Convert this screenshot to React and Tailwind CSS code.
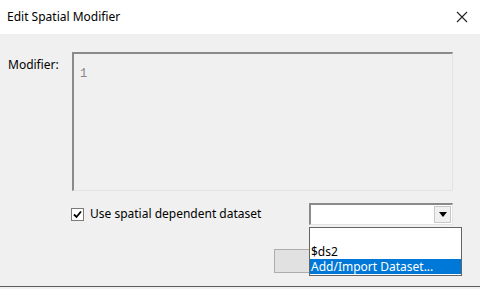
import React from "react";

export default function App() {
  const font = { fontFamily: '"Noto Sans", "Open Sans", sans-serif' };
  return (
    <div className="w-[480px] h-[289px] bg-[#f0f0f0] flex flex-col overflow-hidden text-black" style={font}>
      <div className="h-[34px] bg-white flex items-center justify-between pl-[7px] pr-[12px] shrink-0">
        <span className="text-[12px] leading-none">Edit Spatial Modifier</span>
        <svg width="12" height="12" viewBox="0 0 12 12" className="mt-[-1px]">
          <path d="M1 1 L11 11 M11 1 L1 11" stroke="#222" strokeWidth="1.1" fill="none" />
        </svg>
      </div>
      <div className="relative flex-1 flex flex-col">
        <div className="flex pt-[18px]">
          <span className="w-[72px] pl-[8px] pt-[6px] text-[12px] leading-[14px]">Modifier:</span>
          <div className="w-[381px] h-[139px] border-t-2 border-l-2 border-t-[#8a8a8a] border-l-[#8a8a8a] border-r border-b border-r-[#e3e3e3] border-b-[#e3e3e3] bg-[#f0f0f0] px-[6px] pt-[5px]">
            <span className="text-[12px] leading-none text-[#858585]" style={{ fontFamily: '"Liberation Mono", monospace' }}>1</span>
          </div>
        </div>
        <div className="flex items-center mt-[12px] h-[22px]">
          <div className="ml-[71px] w-[13px] h-[13px] border border-[#7a7a7a] bg-white flex items-center justify-center">
            <svg width="9" height="9" viewBox="0 0 9 9">
              <path d="M1 4.5 L3.5 7 L8 1.5" stroke="#000" strokeWidth="1.8" fill="none" />
            </svg>
          </div>
          <span className="ml-[6px] text-[12px] leading-none">Use spatial dependent dataset</span>
          <div className="ml-auto mr-[27px] w-[144px] h-[22px] bg-white border-t-2 border-l-2 border-t-[#8a8a8a] border-l-[#8a8a8a] border-r border-b border-r-[#e3e3e3] border-b-[#e3e3e3] flex justify-end p-[1px]">
            <div className="w-[17px] h-full bg-[#f0f0f0] border border-[#c8c8c8] flex items-center justify-center">
              <svg width="8" height="5" viewBox="0 0 8 5">
                <path d="M0 0 L8 0 L4 5 Z" fill="#000" />
              </svg>
            </div>
          </div>
        </div>
        <div className="flex mt-[24px] ml-[274px]">
          <div className="w-[75px] h-[24px] border border-[#adadad] bg-[#e1e1e1]"></div>
        </div>
        <div className="absolute left-[309px] top-[193px] w-[153px] bg-white border border-[#646464] text-[12px] leading-[15px] py-[1px]">
          <div className="h-[15px]"></div>
          <div className="px-[1px]">$ds2</div>
          <div className="px-[1px] bg-[#0078d7] text-white">Add/Import Dataset...</div>
        </div>
        <div className="mt-auto h-[3px] border-t border-[#5a5a5a] bg-[#f0f0f0]"></div>
      </div>
    </div>
  );
}
